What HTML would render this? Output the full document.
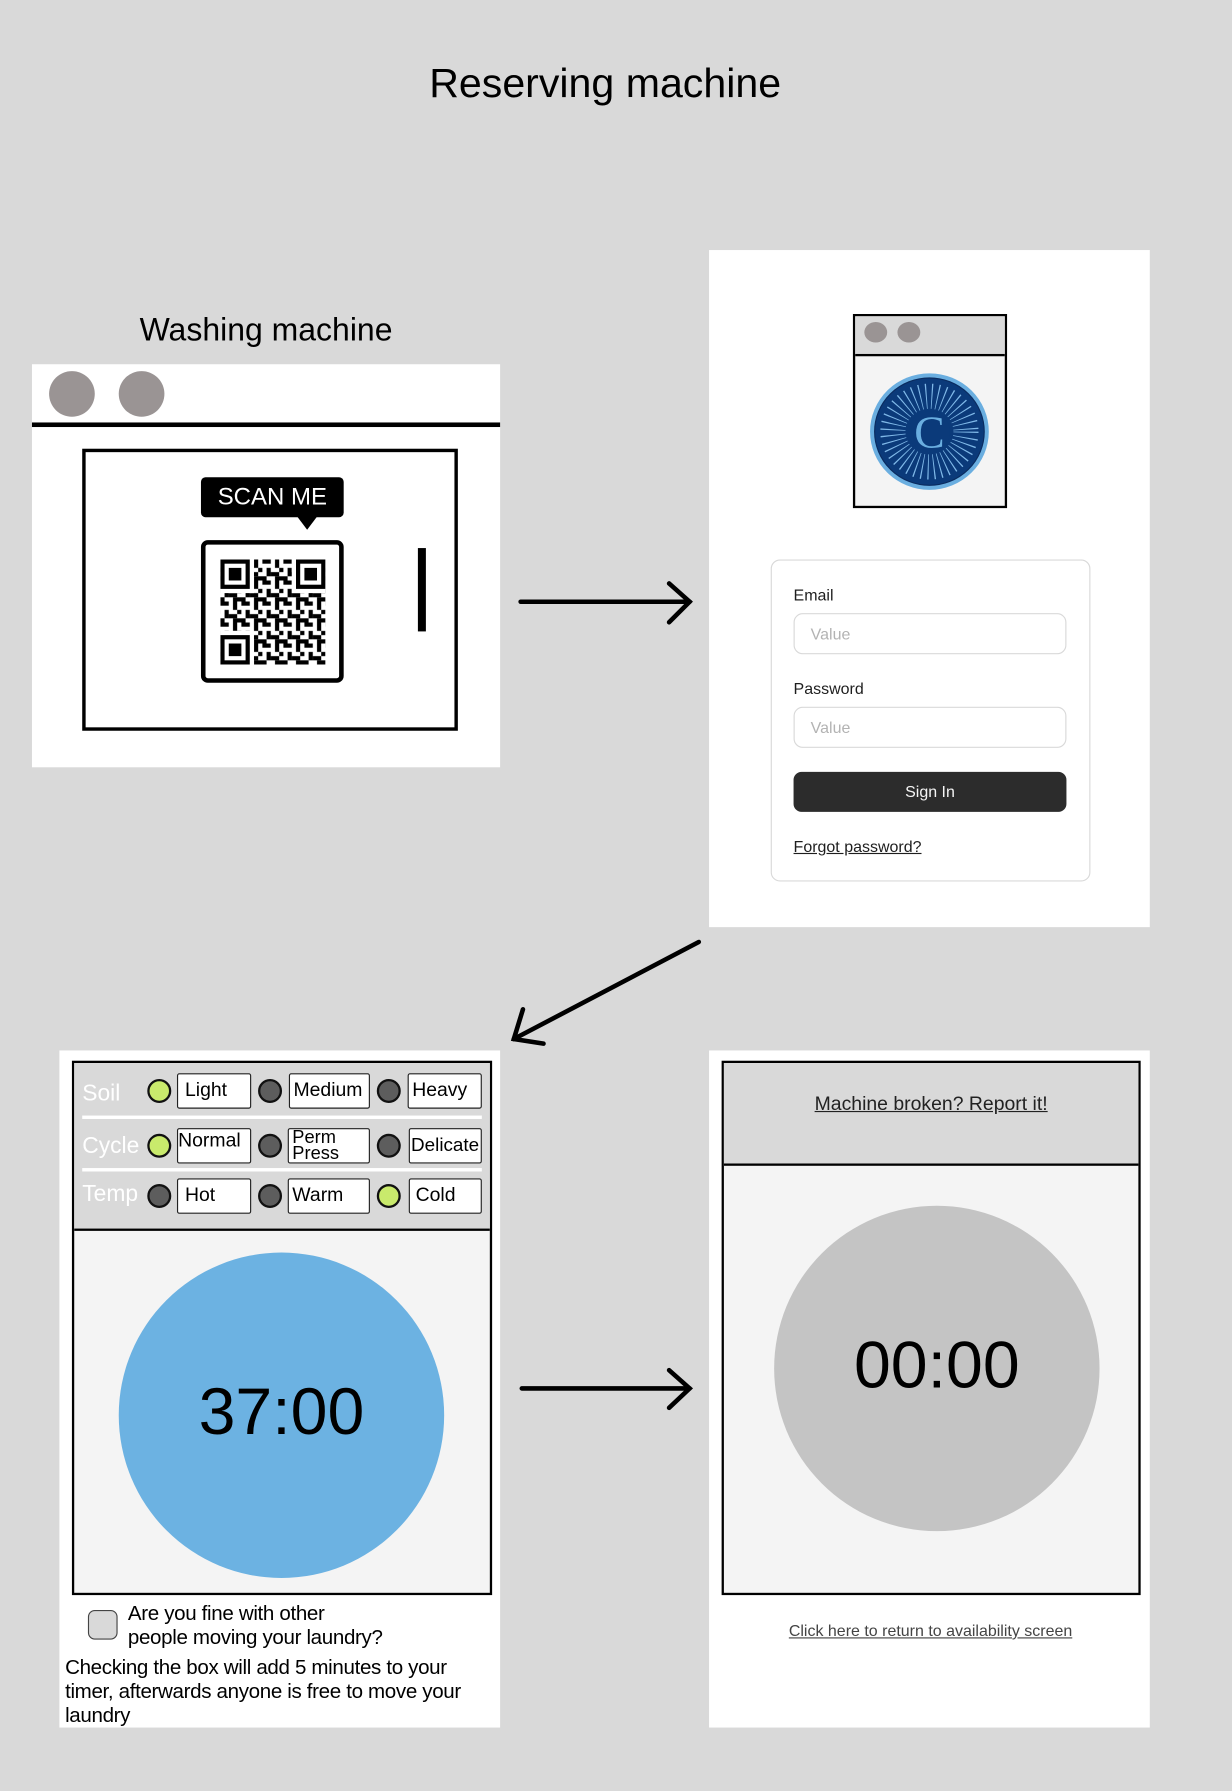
<!DOCTYPE html>
<html><head><meta charset="utf-8"><style>
html,body{margin:0;padding:0;background:#d9d9d9;width:1232px;height:1791px;overflow:hidden}
#w{position:absolute;left:0;top:0;width:1079px;height:1568px;transform:scale(1.14180);transform-origin:0 0;font-family:"Liberation Sans",sans-serif;color:#000}
.a{position:absolute}
.wh{background:#fff}
.t{white-space:nowrap}
.dot{position:absolute;border-radius:50%;border:2px solid #111;width:17px;height:17px;box-sizing:content-box}
.g{background:#c9ea6c}.d{background:#5d5d5d}
.bt{position:absolute;background:#fff;border:1px solid #222;border-radius:2px;height:31px;font-size:17px;line-height:28px;padding-left:3px;box-sizing:border-box}
.lbl{position:absolute;color:#fff;font-size:20px}
.hr{position:absolute;left:72px;width:350px;height:3px;background:#fff}
</style></head><body><div id="w">
<div class="a t" style="left:0;width:1060px;top:52px;text-align:center;font-size:36px">Reserving machine</div>
<div class="a t" style="left:28px;width:410px;top:273px;text-align:center;font-size:28px">Washing machine</div>

<!-- panel 1 -->
<div class="a wh" style="left:28px;top:319px;width:410px;height:353px"></div>
<div class="a" style="left:43px;top:325px;width:40px;height:40px;border-radius:50%;background:#9a9494"></div>
<div class="a" style="left:104px;top:325px;width:40px;height:40px;border-radius:50%;background:#9a9494"></div>
<div class="a" style="left:28px;top:370px;width:410px;height:3.5px;background:#000"></div>
<div class="a" style="left:72px;top:393px;width:329px;height:247px;border:3.5px solid #000;box-sizing:border-box"></div>
<div class="a t" style="left:176px;top:418px;width:125px;height:35px;background:#000;border-radius:4px;color:#fff;font-size:21px;line-height:36px;text-align:center">SCAN ME</div>
<div class="a" style="left:260px;top:452px;width:0;height:0;border-left:9px solid transparent;border-right:9px solid transparent;border-top:12px solid #000"></div>
<div class="a" style="left:176px;top:473px;width:125px;height:125px;border:4.5px solid #000;border-radius:6px;box-sizing:border-box;background:#fff"></div>
<svg class="a" style="left:193px;top:490px" width="92" height="92" viewBox="0 0 25 25">
<defs><pattern id="p" width="5" height="5" patternUnits="userSpaceOnUse">
<rect x="0" y="0" width="2" height="1" fill="#000"/><rect x="3" y="0" width="1" height="2" fill="#000"/><rect x="1" y="2" width="1" height="2" fill="#000"/><rect x="2" y="3" width="2" height="1" fill="#000"/><rect x="4" y="2" width="1" height="1" fill="#000"/><rect x="0" y="4" width="1" height="1" fill="#000"/><rect x="3" y="4" width="2" height="1" fill="#000"/></pattern></defs>
<rect width="25" height="25" fill="url(#p)"/>
<g fill="#fff"><rect x="0" y="0" width="8" height="8"/><rect x="17" y="0" width="8" height="8"/><rect x="0" y="17" width="8" height="8"/></g>
<g fill="none" stroke="#000" stroke-width="1"><rect x="0.5" y="0.5" width="6" height="6"/><rect x="18.5" y="0.5" width="6" height="6"/><rect x="0.5" y="18.5" width="6" height="6"/></g>
<g fill="#000"><rect x="2" y="2" width="3" height="3"/><rect x="20" y="2" width="3" height="3"/><rect x="2" y="20" width="3" height="3"/></g>
</svg>
<div class="a" style="left:366px;top:480px;width:7px;height:73px;background:#000"></div>

<!-- arrows -->
<svg class="a" style="left:0;top:0" width="1079" height="1568">
<g stroke="#000" stroke-width="4" fill="none" stroke-linecap="round">
<line x1="456" y1="527" x2="604" y2="527"/><polyline points="586,511 604,527 586,545"/>
<line x1="612" y1="825" x2="450" y2="910"/><polyline points="458,884 450,910 476,914"/>
<line x1="457" y1="1216" x2="604" y2="1216"/><polyline points="586,1200 604,1216 586,1233"/>
</g></svg>

<!-- panel 2 -->
<div class="a wh" style="left:621px;top:219px;width:386px;height:593px"></div>
<div class="a" style="left:747px;top:275px;width:135px;height:170px;border:2px solid #000;box-sizing:border-box;background:#f4f4f4"></div>
<div class="a" style="left:749px;top:277px;width:131px;height:33px;background:#d9d9d9;border-bottom:2.5px solid #000"></div>
<div class="a" style="left:757px;top:282px;width:20px;height:18px;border-radius:50%;background:#9a9494"></div>
<div class="a" style="left:786px;top:282px;width:20px;height:18px;border-radius:50%;background:#9a9494"></div>
<svg class="a" style="left:760px;top:325px" width="108" height="106" viewBox="0 0 108 106">
<ellipse cx="54" cy="53" rx="52" ry="51" fill="#6aaee0"/>
<ellipse cx="54" cy="53" rx="48" ry="47" fill="#0b3a7a" stroke="#0a2b5f" stroke-width="1"/>
<ellipse cx="54" cy="53" rx="32" ry="31" fill="none" stroke="#7fb8e8" stroke-width="22" stroke-dasharray="0.9 4.1"/>
<circle cx="54" cy="53" r="18" fill="#0b3a7a"/>
<text x="54" y="67" text-anchor="middle" font-family="Liberation Serif,serif" font-size="40" fill="#6aaee0">C</text>
</svg>
<div class="a" style="left:675px;top:490px;width:280px;height:282px;border:1px solid #d9d9d9;border-radius:8px;box-sizing:border-box"></div>
<div class="a t" style="left:695px;top:513px;font-size:14px;color:#1e1e1e">Email</div>
<div class="a" style="left:695px;top:537px;width:239px;height:36px;border:1px solid #d9d9d9;border-radius:8px;box-sizing:border-box"></div>
<div class="a t" style="left:710px;top:547px;font-size:14px;color:#b3b3b3">Value</div>
<div class="a t" style="left:695px;top:595px;font-size:14px;color:#1e1e1e">Password</div>
<div class="a" style="left:695px;top:619px;width:239px;height:36px;border:1px solid #d9d9d9;border-radius:8px;box-sizing:border-box"></div>
<div class="a t" style="left:710px;top:629px;font-size:14px;color:#b3b3b3">Value</div>
<div class="a t" style="left:695px;top:676px;width:239px;height:35px;background:#2c2c2c;border-radius:7px;color:#f5f5f5;font-size:14px;line-height:35px;text-align:center">Sign In</div>
<div class="a t" style="left:695px;top:733px;font-size:14px;color:#1e1e1e;text-decoration:underline">Forgot password?</div>

<!-- panel 3 -->
<div class="a wh" style="left:52px;top:920px;width:386px;height:593px"></div>
<div class="a" style="left:63px;top:929px;width:368px;height:468px;border:2px solid #000;box-sizing:border-box;background:#f4f4f4"></div>
<div class="a" style="left:65px;top:931px;width:364px;height:145px;background:#d9d9d9;border-bottom:2px solid #000"></div>
<div class="lbl t" style="left:72px;top:947px">Soil</div>
<div class="lbl t" style="left:72px;top:993px">Cycle</div>
<div class="lbl t" style="left:72px;top:1035px">Temp</div>
<div class="hr" style="top:977px"></div><div class="hr" style="top:1023px"></div>
<div class="dot g" style="left:129px;top:945px"></div><div class="dot d" style="left:226px;top:945px"></div><div class="dot d" style="left:330px;top:945px"></div>
<div class="dot g" style="left:129px;top:993px"></div><div class="dot d" style="left:226px;top:993px"></div><div class="dot d" style="left:330px;top:993px"></div>
<div class="dot d" style="left:129px;top:1037px"></div><div class="dot d" style="left:226px;top:1037px"></div><div class="dot g" style="left:330px;top:1037px"></div>
<div class="bt t" style="left:155px;top:940px;width:65px;padding-left:6px">Light</div>
<div class="bt t" style="left:253px;top:940px;width:71px">Medium</div>
<div class="bt t" style="left:357px;top:940px;width:65px">Heavy</div>
<div class="bt t" style="left:155px;top:988px;width:65px;padding-left:0;line-height:20px">Normal</div>
<div class="bt t" style="left:252px;top:988px;width:72px;line-height:14px;font-size:16px;padding-top:1px">Perm<br>Press</div>
<div class="bt t" style="left:358px;top:988px;width:64px;padding-left:1px;font-size:16.5px">Delicate</div>
<div class="bt t" style="left:155px;top:1032px;width:65px;padding-left:6px">Hot</div>
<div class="bt t" style="left:252px;top:1032px;width:72px">Warm</div>
<div class="bt t" style="left:358px;top:1032px;width:64px;padding-left:5px">Cold</div>
<div class="a" style="left:104px;top:1097px;width:285px;height:285px;border-radius:50%;background:#6cb2e2"></div>
<div class="a t" style="left:104px;width:285px;top:1203px;text-align:center;font-size:58px">37:00</div>
<div class="a" style="left:77px;top:1410px;width:26px;height:26px;border:1.5px solid #444;border-radius:6px;background:#d9d9d9;box-sizing:border-box"></div>
<div class="a t" style="left:112px;top:1403px;font-size:18px;line-height:21px;letter-spacing:-0.3px">Are you fine with other<br>people moving your laundry?</div>
<div class="a t" style="left:57px;top:1450px;font-size:18px;line-height:21px;letter-spacing:-0.3px">Checking the box will add 5 minutes to your<br>timer, afterwards anyone is free to move your<br>laundry</div>

<!-- panel 4 -->
<div class="a wh" style="left:621px;top:920px;width:386px;height:593px"></div>
<div class="a" style="left:632px;top:929px;width:367px;height:468px;border:2px solid #000;box-sizing:border-box;background:#f4f4f4"></div>
<div class="a" style="left:634px;top:931px;width:363px;height:88px;background:#d9d9d9;border-bottom:2px solid #000"></div>
<div class="a t" style="left:632px;width:367px;top:957px;text-align:center;font-size:17px;color:#222;text-decoration:underline">Machine broken? Report it!</div>
<div class="a" style="left:678px;top:1056px;width:285px;height:285px;border-radius:50%;background:#c4c4c4"></div>
<div class="a t" style="left:678px;width:285px;top:1162px;text-align:center;font-size:58px">00:00</div>
<div class="a t" style="left:621px;width:388px;top:1420px;text-align:center;font-size:14px;color:#444;text-decoration:underline">Click here to return to availability screen</div>
</div></body></html>
